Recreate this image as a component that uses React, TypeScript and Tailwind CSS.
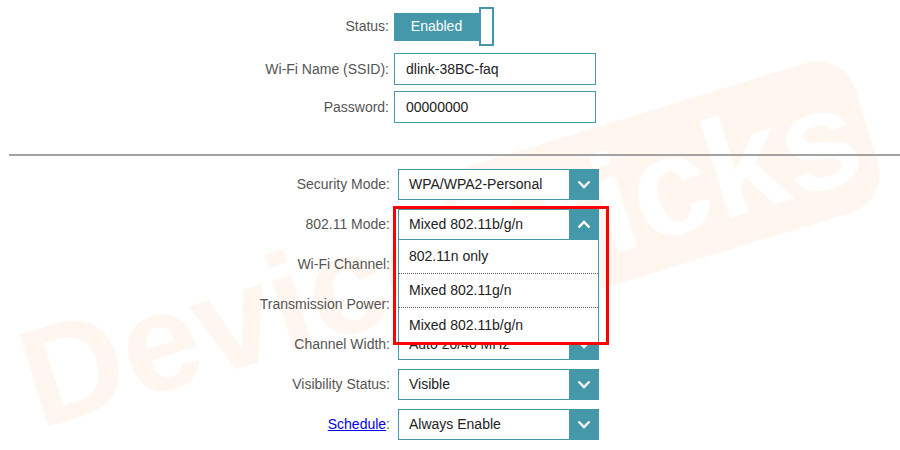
import React from "react";

const Chevron = ({ up }: { up?: boolean }) => (
  <svg width="14" height="9" viewBox="0 0 14 9" className={up ? "rotate-180" : ""}>
    <path d="M1.5 1.5 L7 7 L12.5 1.5" fill="none" stroke="#ffffff" strokeWidth="2.4" />
  </svg>
);

const SelectBox = ({ value, up }: { value: string; up?: boolean }) => (
  <div className="flex w-[201px] h-[31px] bg-white">
    <div className="flex-1 flex items-center pl-[10px] border border-r-0 border-[#4598aa] text-[#222]">
      {value}
    </div>
    <div className="w-[30px] flex items-center justify-center bg-[#4598aa]">
      <Chevron up={up} />
    </div>
  </div>
);

// faint site watermark behind the form
const Watermark = () => (
  <div
    aria-hidden="true"
    className="absolute left-[48px] top-[302px] origin-bottom-left rotate-[-17deg] flex items-center pointer-events-none select-none font-bold text-[140px] leading-none font-['Liberation_Sans',Arial,sans-serif]"
  >
    <div className="text-[#fff6f0]">Device</div>
    <div className="bg-[#fff6f0] text-white px-[12px] py-[8px] rounded-[40px]">Tricks</div>
  </div>
);

const Row = ({ label, children }: { label: React.ReactNode; children: React.ReactNode }) => (
  <div className="flex items-center h-[31px]">
    <div className="w-[390px] text-right text-[#555]">{label}</div>
    <div className="ml-[8px] relative">{children}</div>
  </div>
);

export default function App() {
  const modes = ["802.11n only", "Mixed 802.11g/n", "Mixed 802.11b/g/n"];

  return (
    <div className="relative w-[900px] h-[450px] overflow-hidden bg-white text-[14px] font-['Liberation_Sans',Arial,sans-serif]">
      <Watermark />

      <div className="relative">
        {/* Wireless basics */}
        <div className="pt-[7px]">
          <div className="flex items-center h-[39px]">
            <div className="w-[389px] text-right text-[#555]">Status:</div>
            <div className="ml-[5px] flex items-center">
              <div className="w-[85px] h-[28px] bg-[#4598aa] text-white flex items-center justify-center">
                Enabled
              </div>
              <div className="w-[15px] h-[39px] border-2 border-[#4598aa] bg-white" />
            </div>
          </div>

          <div className="flex items-center mt-[7px]">
            <div className="w-[389px] text-right text-[#555]">Wi-Fi Name (SSID):</div>
            <div className="ml-[5px] w-[202px] h-[32px] border border-[#4598aa] bg-white pl-[11px] flex items-center text-[#222]">
              dlink-38BC-faq
            </div>
          </div>

          <div className="flex items-center mt-[6px]">
            <div className="w-[389px] text-right text-[#555]">Password:</div>
            <div className="ml-[5px] w-[202px] h-[32px] border border-[#4598aa] bg-white pl-[11px] flex items-center text-[#222]">
              00000000
            </div>
          </div>
        </div>

        <div className="mt-[31px] ml-[9px] h-[2px] bg-[#a3a3a3]" />

        {/* Advanced settings */}
        <div className="pt-[13px] flex flex-col gap-[9px]">
          <Row label="Security Mode:">
            <SelectBox value="WPA/WPA2-Personal" />
          </Row>

          <div className="relative z-20">
            <Row label="802.11 Mode:">
              <SelectBox value="Mixed 802.11b/g/n" up />
              {/* open dropdown list */}
              <div className="absolute left-0 top-full w-[201px] bg-white border-x border-b border-[#4598aa]">
                {modes.map((m, i) => (
                  <div
                    key={m}
                    className={`h-[34px] flex items-center pl-[10px] text-[#222] ${
                      i < modes.length - 1 ? "border-b border-dotted border-[#555]" : ""
                    }`}
                  >
                    {m}
                  </div>
                ))}
              </div>
              {/* highlight */}
              <div className="absolute left-[-5px] top-[-3px] w-[216px] h-[139px] border-[3px] border-[#ff0000] pointer-events-none" />
            </Row>
          </div>

          <Row label="Wi-Fi Channel:">
            <SelectBox value="Auto" />
          </Row>
          <Row label="Transmission Power:">
            <SelectBox value="High" />
          </Row>
          <Row label="Channel Width:">
            <SelectBox value="Auto 20/40 MHz" />
          </Row>
          <Row label="Visibility Status:">
            <SelectBox value="Visible" />
          </Row>
          <Row
            label={
              <>
                <a className="text-[#0000ee] underline cursor-pointer">Schedule</a>:
              </>
            }
          >
            <SelectBox value="Always Enable" />
          </Row>
        </div>
      </div>
    </div>
  );
}
